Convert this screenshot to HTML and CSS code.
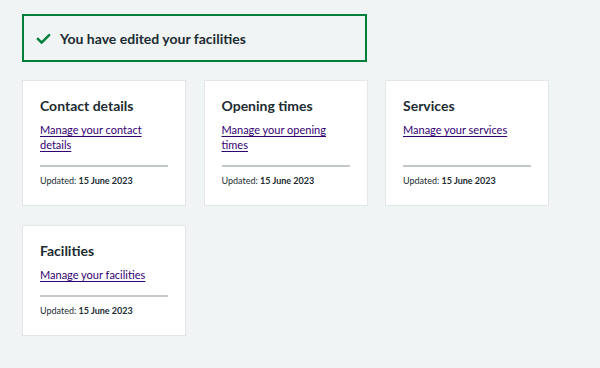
FILE: index.html
```html
<!DOCTYPE html>
<html lang="en">
<head>
  <meta charset="UTF-8" />
  <meta name="viewport" content="width=device-width,initial-scale=1.0" />
  <title>Manage your facilities</title>
  <link rel="stylesheet" href="styles.css">
</head>
<body>
  <main class="page">
    <!-- Success banner -->
    <div class="success-banner">
      <svg class="success-icon" viewBox="0 0 24 24" width="15" height="15" aria-hidden="true">
        <path d="M3 12.5l6 6L21 6.5" fill="none" stroke="#007f3b" stroke-width="4" stroke-linecap="round" stroke-linejoin="round"/>
      </svg>
      <span class="success-text">You have edited your facilities</span>
    </div>

    <div class="card-grid">
      <div class="card">
        <h2 class="card-title">Contact details</h2>
        <a class="card-link" href="#">Manage your contact details</a>
        <div class="card-footer">
          <hr class="card-rule">
          <p class="card-updated">Updated: <strong>15 June 2023</strong></p>
        </div>
      </div>
      <div class="card">
        <h2 class="card-title">Opening times</h2>
        <a class="card-link" href="#">Manage your opening times</a>
        <div class="card-footer">
          <hr class="card-rule">
          <p class="card-updated">Updated: <strong>15 June 2023</strong></p>
        </div>
      </div>
      <div class="card">
        <h2 class="card-title">Services</h2>
        <a class="card-link" href="#">Manage your services</a>
        <div class="card-footer">
          <hr class="card-rule">
          <p class="card-updated">Updated: <strong>15 June 2023</strong></p>
        </div>
      </div>
      <div class="card">
        <h2 class="card-title">Facilities</h2>
        <a class="card-link" href="#">Manage your facilities</a>
        <div class="card-footer">
          <hr class="card-rule">
          <p class="card-updated">Updated: <strong>15 June 2023</strong></p>
        </div>
      </div>
    </div>
  </main>
</body>
</html>
```

FILE: styles.css
```css
html,body{margin:0;background:#f0f4f5}
body {
  font-family: Lato, "Noto Sans", sans-serif;
  color: #212b32;
}
.page {
  padding: 14px 22px;
}

/* Success banner */
.success-banner {
  display: flex;
  align-items: center;
  gap: 9px;
  width: 345px;
  height: 48px;
  box-sizing: border-box;
  border: 2px solid #007f3b;
  padding: 0 12px;
  margin-bottom: 18px;
}
.success-icon {
  flex: none;
}
.success-text {
  font-size: 14px;
  font-weight: 700;
}

/* Cards */
.card-grid {
  display: grid;
  grid-template-columns: repeat(3, 164px);
  gap: 19px 17.5px;
}
.card {
  display: flex;
  flex-direction: column;
  background: #fff;
  border: 1px solid #e3e7e9;
  padding: 16px 17px 17px;
}
.card-title {
  margin: 0 0 7px;
  font-size: 14px;
  line-height: 18px;
  font-weight: 700;
}
.card-link {
  color: #330072;
  font-size: 11px;
  line-height: 15px;
  text-decoration: underline;
  text-underline-offset: 2px;
}
.card-footer {
  margin-top: auto;
  padding-top: 13px;
}
.card-rule {
  margin: 0 0 7px;
  border: none;
  border-top: 2px solid #c3c8cb;
}
.card-updated {
  margin: 0;
  font-size: 9px;
  line-height: 14px;
}
```
